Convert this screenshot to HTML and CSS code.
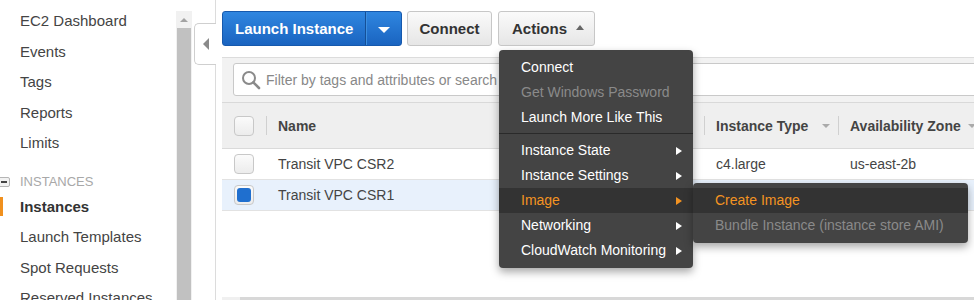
FILE: index.html
```html
<!DOCTYPE html>
<html lang="en">
<head>
<meta charset="utf-8">
<title>EC2 Instances</title>
<link rel="stylesheet" href="styles.css">
</head>
<body>
<div class="page">
  <nav class="sidebar">
    <ul class="nav">
      <li>EC2 Dashboard</li>
      <li>Events</li>
      <li>Tags</li>
      <li>Reports</li>
      <li>Limits</li>
    </ul>
    <div class="group"><span class="toggle"></span>INSTANCES</div>
    <ul class="nav">
      <li class="active">Instances</li>
      <li>Launch Templates</li>
      <li>Spot Requests</li>
      <li>Reserved Instances</li>
    </ul>
  </nav>

  <div class="vscroll">
    <div class="vscroll-up"><span class="tri-up"></span></div>
    <div class="vscroll-thumb"></div>
  </div>

  <div class="gutter">
    <div class="g-line g-top"></div>
    <div class="collapse-tab"><span class="tri-left"></span></div>
    <div class="g-line g-bottom"></div>
  </div>

  <main class="main">
    <div class="toolbar">
      <div class="btn-split">
        <span class="btn-split-main">Launch Instance</span>
        <span class="btn-split-caret"><span class="tri-down-white"></span></span>
      </div>
      <button class="btn btn-connect">Connect</button>
      <div class="dropdown">
        <button class="btn btn-actions">Actions <span class="tri-up-dark"></span></button>
        <div class="menu">
          <div class="menu-item">Connect</div>
          <div class="menu-item disabled">Get Windows Password</div>
          <div class="menu-item">Launch More Like This</div>
          <div class="menu-sep"></div>
          <div class="menu-item has-sub">Instance State <span class="tri-right"></span></div>
          <div class="menu-item has-sub">Instance Settings <span class="tri-right"></span></div>
          <div class="menu-item has-sub active">Image <span class="tri-right"></span>
            <div class="submenu">
              <div class="menu-item active">Create Image</div>
              <div class="menu-item disabled">Bundle Instance (instance store AMI)</div>
            </div>
          </div>
          <div class="menu-item has-sub">Networking <span class="tri-right"></span></div>
          <div class="menu-item has-sub">CloudWatch Monitoring <span class="tri-right"></span></div>
        </div>
      </div>
    </div>

    <div class="panel">
      <div class="filter">
        <div class="search">
          <svg class="search-icon" width="20" height="20" viewBox="0 0 20 20" aria-hidden="true">
            <circle cx="8" cy="8" r="6" fill="none" stroke="#8a8a8a" stroke-width="2"/>
            <line x1="12.3" y1="12.3" x2="18" y2="18" stroke="#8a8a8a" stroke-width="2.6" stroke-linecap="round"/>
          </svg>
          <span class="placeholder">Filter by tags and attributes or search by keyword</span>
        </div>
      </div>

      <div class="grid head">
        <div class="cell c-check"><span class="checkbox"></span></div>
        <div class="cell hcell">Name</div>
        <div class="cell hcell">Instance Type<span class="sort sort-end"></span></div>
        <div class="cell hcell">Availability Zone<span class="sort"></span></div>
      </div>
      <div class="grid row">
        <div class="cell c-check"><span class="checkbox"></span></div>
        <div class="cell dcell">Transit VPC CSR2</div>
        <div class="cell dcell">c4.large</div>
        <div class="cell dcell">us-east-2b</div>
      </div>
      <div class="grid row selected">
        <div class="cell c-check"><span class="checkbox checked"></span></div>
        <div class="cell dcell">Transit VPC CSR1</div>
        <div class="cell dcell">c4.large</div>
        <div class="cell dcell">us-east-2b</div>
      </div>
      <div class="table-space"></div>
      <div class="hscroll"><div class="hscroll-thumb"></div></div>
    </div>
  </main>
</div>
</body>
</html>
```

FILE: styles.css
```css
html, body {
  margin: 0;
  padding: 0;
  background: #fff;
}
body {
  font-family: "Liberation Sans", Arial, sans-serif;
  width: 974px;
  height: 300px;
  overflow: hidden;
}
.page {
  display: flex;
  height: 300px;
}

/* Sidebar */
.sidebar {
  width: 176px;
  flex: none;
  padding-top: 6px;
  color: #444;
  font-size: 15px;
  box-sizing: border-box;
}
.nav {
  list-style: none;
  margin: 0;
  padding: 0;
}
.nav li {
  line-height: 30.5px;
  height: 30.5px;
  padding-left: 20px;
  white-space: nowrap;
}
.nav li.active {
  padding-left: 0;
  display: flex;
  align-items: center;
  font-weight: bold;
  color: #333;
}
.nav li.active::before {
  content: "";
  width: 3px;
  height: 19px;
  background: #f0901e;
  margin-right: 17px;
}
.group {
  margin-top: 13px;
  height: 20px;
  display: flex;
  align-items: center;
  font-size: 13px;
  color: #a8a8a8;
}
.toggle {
  width: 12px;
  height: 10px;
  margin-left: -2px;
  margin-right: 10px;
  box-sizing: border-box;
  border: 1px solid #b5b5b5;
  border-radius: 2px;
  background: #f2f2f2;
  display: flex;
  align-items: center;
  justify-content: center;
}
.toggle::after {
  content: "";
  width: 6px;
  height: 2px;
  background: #444;
}

/* vertical scrollbar */
.vscroll {
  width: 16px;
  flex: none;
  margin-top: 11px;
  background: #f1f1f1;
  display: flex;
  flex-direction: column;
}
.vscroll-up {
  height: 17px;
  display: flex;
  align-items: center;
  justify-content: center;
}
.tri-up {
  width: 0;
  height: 0;
  border-left: 4px solid transparent;
  border-right: 4px solid transparent;
  border-bottom: 4px solid #a3a3a3;
}
.vscroll-thumb {
  flex: 1;
  margin: 0 1px;
  background: #c1c1c1;
}

/* gutter with collapse tab */
.gutter {
  width: 24px;
  flex: none;
  display: flex;
  flex-direction: column;
}
.g-line {
  border-right: 1px solid #dcdcdc;
}
.g-top {
  height: 23px;
}
.g-bottom {
  flex: 1;
}
.collapse-tab {
  height: 42px;
  margin-left: 2px;
  box-sizing: border-box;
  border: 1px solid #cfcfcf;
  border-right: 0;
  border-radius: 5px 0 0 5px;
  background: #fff;
  display: flex;
  align-items: center;
  padding-left: 8px;
}
.tri-left {
  width: 0;
  height: 0;
  border-top: 6px solid transparent;
  border-bottom: 6px solid transparent;
  border-right: 6px solid #8a8a8a;
}

/* main */
.main {
  flex: 1;
  min-width: 0;
  padding-left: 6px;
  overflow: hidden;
}
.toolbar {
  display: flex;
  padding-top: 11px;
  height: 35px;
}
.btn-split {
  display: flex;
  height: 35px;
  width: 180px;
  border-radius: 3px;
  overflow: hidden;
  background: linear-gradient(#2f86e0, #1a64c0);
  border: 1px solid #1659ad;
  box-sizing: border-box;
  color: #fff;
  font-weight: bold;
  font-size: 15px;
}
.btn-split-main {
  width: 143px;
  box-sizing: border-box;
  padding-left: 12px;
  display: flex;
  align-items: center;
  border-right: 1px solid #154f96;
}
.btn-split-caret {
  flex: 1;
  display: flex;
  align-items: center;
  justify-content: center;
  border-left: 1px solid #3d8fe0;
  padding-top: 2px;
}
.tri-down-white {
  width: 0;
  height: 0;
  border-left: 6px solid transparent;
  border-right: 6px solid transparent;
  border-top: 6px solid #fff;
}
.btn {
  height: 35px;
  box-sizing: border-box;
  border: 1px solid #c7c7c7;
  border-radius: 3px;
  background: linear-gradient(#fafafa, #e6e6e6);
  color: #333;
  font-family: "Liberation Sans", Arial, sans-serif;
  font-weight: bold;
  font-size: 15px;
  padding: 0;
  display: flex;
  align-items: center;
}
.btn-connect {
  margin-left: 5px;
  width: 85px;
  justify-content: center;
}
.dropdown {
  position: relative;
  margin-left: 6px;
}
.btn-actions {
  width: 97px;
  padding-left: 13px;
}
.tri-up-dark {
  width: 0;
  height: 0;
  margin-left: 9px;
  margin-top: -2px;
  border-left: 4.5px solid transparent;
  border-right: 4.5px solid transparent;
  border-bottom: 5px solid #666;
}

/* Actions menu */
.menu {
  position: absolute;
  top: 39px;
  left: 1px;
  width: 194px;
  padding: 5px 0;
  background: #444;
  border-radius: 4px;
  box-shadow: 0 4px 8px rgba(0, 0, 0, 0.35);
  z-index: 10;
  color: #fff;
  font-size: 14px;
}
.menu-item {
  position: relative;
  height: 25px;
  line-height: 25px;
  padding-left: 22px;
  padding-right: 11px;
  white-space: nowrap;
  display: flex;
  align-items: center;
  justify-content: space-between;
}
.menu-item.disabled {
  color: #8a8a8a;
}
.menu-item.active {
  background: #333;
  color: #f39322;
}
.menu-sep {
  height: 1px;
  background: #2a2a2a;
  margin: 3px 0 4px;
}
.tri-right {
  width: 0;
  height: 0;
  border-top: 4.5px solid transparent;
  border-bottom: 4.5px solid transparent;
  border-left: 6px solid #fff;
}
.menu-item.active .tri-right {
  border-left-color: #f39322;
}
.submenu {
  position: absolute;
  left: 100%;
  top: -5px;
  width: 275px;
  padding: 5px 0;
  background: #444;
  border-radius: 4px;
  box-shadow: 0 4px 8px rgba(0, 0, 0, 0.35);
  color: #fff;
  z-index: 11;
}

/* panel */
.panel {
  margin-top: 11px;
  width: 820px;
  border-top: 1px solid #dcdcdc;
}
.filter {
  background: #f2f2f2;
  padding: 5px 0 6px 11px;
  border-bottom: 1px solid #d9d9d9;
}
.search {
  height: 33px;
  box-sizing: border-box;
  background: #fff;
  border: 1px solid #c9c9c9;
  border-radius: 3px;
  display: flex;
  align-items: center;
  padding-left: 7px;
}
.search-icon {
  flex: none;
}
.placeholder {
  margin-left: 5px;
  color: #888;
  font-size: 14px;
  white-space: nowrap;
}
.grid {
  display: grid;
  grid-template-columns: 44px 438px 134px 1fr;
}
.head {
  height: 45px;
  background: #efefef;
  border-bottom: 1px solid #dadada;
  box-sizing: content-box;
}
.cell {
  display: flex;
  align-items: center;
  white-space: nowrap;
}
.c-check {
  padding-left: 12px;
}
.hcell {
  font-weight: bold;
  font-size: 14px;
  color: #444;
}
.hcell::before {
  content: "";
  width: 1px;
  height: 19px;
  background: #d0d0d0;
  margin-right: 11px;
}
.sort {
  width: 0;
  height: 0;
  margin-left: 7px;
  border-left: 4px solid transparent;
  border-right: 4px solid transparent;
  border-top: 4px solid #aaa;
}
.sort-end {
  margin-left: auto;
  margin-right: 8px;
}
.row {
  height: 30px;
  border-bottom: 1px solid #e2e2e2;
  background: #fff;
}
.row.selected {
  background: #e8f1fc;
}
.dcell {
  padding-left: 12px;
  font-size: 14px;
  color: #444;
}
.checkbox {
  width: 20px;
  height: 20px;
  box-sizing: border-box;
  border: 1px solid #c8c8c8;
  border-radius: 4px;
  background: linear-gradient(#fbfbfb, #ececec);
  display: flex;
  align-items: center;
  justify-content: center;
}
.checkbox.checked::after {
  content: "";
  width: 14px;
  height: 14px;
  border-radius: 3px;
  background: #1f6fcf;
}
.table-space {
  height: 86px;
}
.hscroll {
  height: 4px;
  background: #f0f0f0;
  padding-left: 18px;
}
.hscroll-thumb {
  height: 4px;
  background: #d8d8d8;
}
```
